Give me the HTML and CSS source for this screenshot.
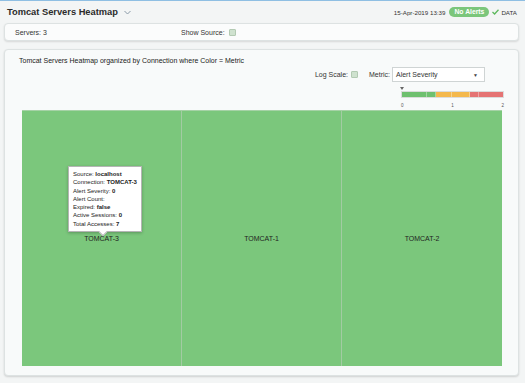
FILE: index.html
```html
<!DOCTYPE html>
<html lang="en">
<head>
    <meta charset="UTF-8">
    <meta name="viewport" content="width=device-width, initial-scale=1.0">
    <title>Tomcat Servers Heatmap</title>
    <link rel="stylesheet" href="styles.css">
</head>
<body>

    <div class="header">
        <div class="title">
            Tomcat Servers Heatmap
            <svg class="chevron" width="7" height="5" viewBox="0 0 7 5"><path d="M0.5 1 L3.5 4 L6.5 1" fill="none" stroke="#8a9aa8" stroke-width="1"/></svg>
        </div>
        <div class="status">
            <span class="date">15-Apr-2019 13:39</span>
            <span class="pill">No Alerts</span>
            <svg class="check" width="7" height="6" viewBox="0 0 7 6"><path d="M0.5 3 L2.6 5 L6.5 0.8" fill="none" stroke="#5cb85c" stroke-width="1.3"/></svg>
            <span class="data">DATA</span>
        </div>
    </div>

    <div class="servers-bar">
        <span class="servers-count">Servers: 3</span>
        <span class="label">Show Source:</span>
        <span class="checkbox"></span>
    </div>

    <div class="panel">
        <div class="caption">Tomcat Servers Heatmap organized by Connection where Color = Metric</div>

        <div class="controls">
            <span class="label">Log Scale:</span>
            <span class="checkbox"></span>
            <span class="label metric-label">Metric:</span>
            <div class="select">
                <span>Alert Severity</span>
                <span class="arrow">&#9660;</span>
            </div>
        </div>

        <div class="legend">
            <div class="marker"></div>
            <div class="bar">
                <div class="seg green"></div>
                <div class="seg green"></div>
                <div class="seg orange"></div>
                <div class="seg orange"></div>
                <div class="seg red"></div>
                <div class="seg red"></div>
            </div>
            <div class="ticks">
                <span>0</span>
                <span>1</span>
                <span>2</span>
            </div>
        </div>

        <div class="heatmap">
            <div class="cell">
                TOMCAT-3
                <div class="tooltip">
                    <div>Source: <b>localhost</b></div>
                    <div>Connection: <b>TOMCAT-3</b></div>
                    <div>Alert Severity: <b>0</b></div>
                    <div>Alert Count:</div>
                    <div>Expired: <b>false</b></div>
                    <div>Active Sessions: <b>0</b></div>
                    <div>Total Accesses: <b>7</b></div>
                </div>
            </div>
            <div class="cell">TOMCAT-1</div>
            <div class="cell">TOMCAT-2</div>
        </div>
    </div>

</body>
</html>
```

FILE: styles.css
```css
body {
    margin: 0;
    height: 383px;
    box-sizing: border-box;
    font-family: "Liberation Sans", Arial, sans-serif;
    background: #f3f5f5;
    border-top: 1px solid #8fbfe3;
    color: #333;
    overflow: hidden;
}

.header {
    display: flex;
    justify-content: space-between;
    align-items: center;
    height: 22px;
    padding: 0 8px 0 7px;
}

.title {
    font-size: 9.3px;
    font-weight: bold;
    color: #2b2b2b;
    display: flex;
    align-items: center;
}

.chevron {
    margin-left: 6px;
    margin-top: 1px;
}

.status {
    display: flex;
    align-items: center;
    font-size: 6.2px;
    color: #333;
}

.pill {
    background: #7bc67b;
    color: #fff;
    font-weight: bold;
    font-size: 6.8px;
    height: 10px;
    line-height: 10px;
    padding: 0 5px;
    border-radius: 5px;
    margin: 0 3px 0 4px;
}

.check {
    margin-right: 2px;
}

.servers-bar {
    display: flex;
    align-items: center;
    height: 16px;
    margin: 0 6px 0 4px;
    padding-left: 10px;
    background: #fbfcfc;
    border: 1px solid #dde2e2;
    border-radius: 4px;
    box-shadow: 0 1px 2px rgba(0, 0, 0, 0.12);
    font-size: 7px;
}

.servers-count {
    width: 166px;
}

.label {
    color: #333;
}

.checkbox {
    display: inline-block;
    width: 5px;
    height: 5px;
    background: #cfe2cf;
    border: 1px solid #b3cab3;
    border-radius: 1px;
    margin-left: 4px;
}

.panel {
    margin: 8px 6px 0 4px;
    height: 325px;
    background: #f8fafa;
    border: 1px solid #dde2e2;
    border-radius: 4px;
    box-shadow: 0 1px 2px rgba(0, 0, 0, 0.15);
    padding: 0 14px 0 17px;
    font-size: 7px;
}

.caption {
    padding-top: 6px;
    line-height: 10px;
    margin-left: -3px;
    color: #222;
}

.controls {
    display: flex;
    align-items: center;
    justify-content: flex-end;
    height: 15px;
    margin-top: 1px;
    margin-right: 19px;
}

.controls .checkbox {
    margin-left: 3px;
}

.metric-label {
    margin-left: 11px;
    margin-right: 2px;
}

.select {
    height: 13px;
    background: #fff;
    border: 1px solid #cfd4d4;
    display: flex;
    align-items: center;
    justify-content: space-between;
    padding: 0 6px 0 3px;
    width: 82px;
}

.arrow {
    font-size: 5px;
    color: #444;
}

.legend {
    width: 103px;
    margin: 5px 0 0 auto;
}

.marker {
    width: 0;
    height: 0;
    border-left: 2px solid transparent;
    border-right: 2px solid transparent;
    border-top: 3px solid #666;
    margin-left: -1px;
    margin-bottom: 1px;
}

.bar {
    display: flex;
    height: 5px;
    border: 1px solid #dcdcdc;
}

.seg {
    border-right: 1px solid rgba(255, 255, 255, 0.35);
}

.seg:nth-child(1) { flex: 25; }
.seg:nth-child(2) { flex: 9; }
.seg:nth-child(3) { flex: 16; }
.seg:nth-child(4) { flex: 18; }
.seg:nth-child(5) { flex: 8; }
.seg:nth-child(6) { flex: 26; border-right: none; }

.green { background: #6fc06f; }
.orange { background: #f4b84c; }
.red { background: #e57373; }

.ticks {
    display: flex;
    justify-content: space-between;
    font-size: 4.5px;
    line-height: 6px;
    margin-top: 5px;
    color: #555;
}

.heatmap {
    display: grid;
    grid-template-columns: repeat(3, 1fr);
    width: 480px;
    height: 256px;
    margin-top: 1px;
    background: #7bc77c;
    border-top: 1px solid #a6d2a6;
    box-sizing: border-box;
}

.cell {
    position: relative;
    display: flex;
    align-items: center;
    justify-content: center;
    border-right: 1px solid #a3cba3;
    color: #1f1f1f;
    font-size: 7px;
}

.cell:last-child {
    border-right: none;
}

.tooltip {
    position: absolute;
    left: 46px;
    top: 55px;
    background: #fff;
    border: 1px solid #b5b5b5;
    box-shadow: 0 1px 3px rgba(0, 0, 0, 0.25);
    padding: 3px 4px;
    font-size: 6px;
    line-height: 8.3px;
    color: #222;
    white-space: nowrap;
}

.tooltip::after {
    content: "";
    position: absolute;
    left: 31px;
    bottom: -4px;
    width: 5px;
    height: 5px;
    background: #fff;
    border-right: 1px solid #b5b5b5;
    border-bottom: 1px solid #b5b5b5;
    transform: rotate(45deg);
}
```
